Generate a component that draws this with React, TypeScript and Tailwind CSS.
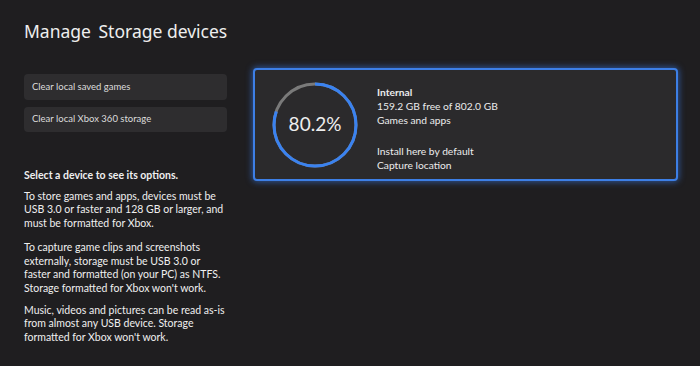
export default function App() {
  const pct = 80.2;
  const r = 41;
  const c = 2 * Math.PI * r;

  return (
    <div className="w-[700px] h-[366px] bg-[#1f1e20] text-[#e6e6e6] overflow-hidden font-['Lato',sans-serif]">
      <h1 className="pl-6 pt-[19px] text-[17.5px] leading-6 text-[#eeeeee] font-['Noto_Sans',sans-serif]">
        Manage <span className="ml-[3px]">Storage devices</span>
      </h1>

      <div className="flex pl-6 mt-[25px]">
        <div className="w-[203px] flex flex-col">
          <button className="h-[26px] mt-[6px] rounded-sm bg-[#2e2d2f] text-left pl-2 text-[9.5px] text-[#dcdcdc]">
            Clear local saved games
          </button>
          <button className="h-[25px] mt-[7px] rounded-sm bg-[#2e2d2f] text-left pl-2 text-[9.5px] text-[#dcdcdc]">
            Clear local Xbox 360 storage
          </button>

          <div className="mt-[37px] text-[10.5px] leading-[13.7px] text-[#efefef] w-[206px]">
            <p className="font-bold">Select a device to see its options.</p>
            <p className="mt-[7px]">
              To store games and apps, devices must be USB 3.0 or faster and 128 GB or larger, and must be formatted for Xbox.
            </p>
            <p className="mt-[10px]">
              To capture game clips and screenshots externally, storage must be USB 3.0 or
              <br />
              faster and formatted (on your PC) as NTFS. Storage formatted for Xbox won't work.
            </p>
            <p className="mt-[8px]">
              Music, videos and pictures can be read as-is from almost any USB device. Storage formatted for Xbox won't work.
            </p>
          </div>
        </div>

        <div className="ml-[26px] w-[425px] h-[113px] rounded-[4px] border-[2px] border-[#3d7fe6] bg-[#2b2a2c] shadow-[0_0_6px_1px_rgba(59,130,246,0.55)] flex items-center pl-[17px]">
          <div className="relative w-[86px] h-[86px]">
            <svg width="86" height="86" viewBox="0 0 86 86">
              <circle cx="43" cy="43" r={r} fill="none" stroke="#7a7a7a" strokeWidth="3" />
              <circle
                cx="43"
                cy="43"
                r={r}
                fill="none"
                stroke="#3a82f0"
                strokeWidth="3"
                strokeDasharray={`${(c * pct) / 100} ${c}`}
                transform="rotate(-90 43 43)"
              />
            </svg>
            <div className="absolute inset-0 flex items-center justify-center text-[19px] text-[#eeeeee]">80.2%</div>
          </div>
          <div className="ml-[19px] text-[10.25px] leading-[14px] text-[#ececec] mt-[7px]">
            <p className="font-bold">Internal</p>
            <p>159.2 GB free of 802.0 GB</p>
            <p>Games and apps</p>
            <p className="mt-[17px]">Install here by default</p>
            <p>Capture location</p>
          </div>
        </div>
      </div>
    </div>
  );
}
